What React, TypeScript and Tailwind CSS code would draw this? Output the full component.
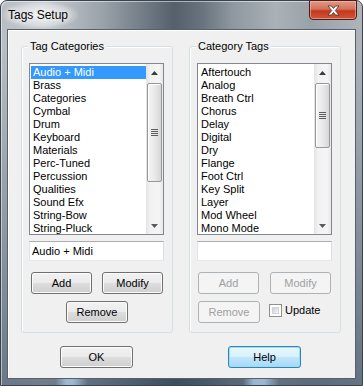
import React from "react";

const leftItems = [
  "Audio + Midi",
  "Brass",
  "Categories",
  "Cymbal",
  "Drum",
  "Keyboard",
  "Materials",
  "Perc-Tuned",
  "Percussion",
  "Qualities",
  "Sound Efx",
  "String-Bow",
  "String-Pluck",
];

const rightItems = [
  "Aftertouch",
  "Analog",
  "Breath Ctrl",
  "Chorus",
  "Delay",
  "Digital",
  "Dry",
  "Flange",
  "Foot Ctrl",
  "Key Split",
  "Layer",
  "Mod Wheel",
  "Mono Mode",
];

function Arrow({ up }: { up?: boolean }) {
  return (
    <svg width="7" height="4" viewBox="0 0 7 4">
      {up ? (
        <path d="M0 4 L3.5 0 L7 4 Z" fill="#3c3c3c" />
      ) : (
        <path d="M0 0 L7 0 L3.5 4 Z" fill="#5a5a5a" />
      )}
    </svg>
  );
}

function Scrollbar({ big }: { big?: boolean }) {
  return (
    <div className="w-[17px] h-full flex flex-col bg-[linear-gradient(90deg,#e3e3e3_0%,#f2f2f2_25%,#f5f5f5_75%,#e8e8e8_100%)]">
      <div className="h-[17px] flex items-center justify-center">
        <Arrow up />
      </div>
      <div
        className={
          big
            ? "mt-[2px] mx-[1px] h-[99px] rounded-[2px] border border-[#979797] bg-[linear-gradient(90deg,#f4f4f4_0%,#eaeaea_50%,#d6d6d6_100%)] shadow-[inset_1px_1px_0_#fff] flex items-center justify-center"
            : "mt-[2px] mx-[1px] h-[65px] rounded-[2px] border border-[#979797] bg-[linear-gradient(90deg,#f4f4f4_0%,#eaeaea_50%,#d6d6d6_100%)] shadow-[inset_1px_1px_0_#fff] flex items-center justify-center"
        }
      >
        <div className="flex flex-col gap-[1px]">
          <div className="w-[7px] h-[1px] bg-[#5d5d5d]" />
          <div className="w-[7px] h-[1px] bg-[#5d5d5d]" />
          <div className="w-[7px] h-[1px] bg-[#5d5d5d]" />
          <div className="w-[7px] h-[1px] bg-[#5d5d5d]" />
        </div>
      </div>
      <div className="flex-1" />
      <div className="h-[17px] flex items-center justify-center">
        <Arrow />
      </div>
    </div>
  );
}

function ListBox({ items, hasSel, big }: { items: string[]; hasSel?: boolean; big?: boolean }) {
  return (
    <div className="w-[135px] h-[172px] border border-[#828790] bg-white flex">
      <div className="flex-1 pt-[2px] pl-[1px] overflow-hidden">
        {items.map((it, i) => (
          <div
            key={it}
            className={
              hasSel && i === 0
                ? "h-[13px] leading-[13px] pl-[2px] bg-[#3399ff] text-white whitespace-nowrap"
                : "h-[13px] leading-[13px] pl-[2px] text-black whitespace-nowrap"
            }
          >
            {it}
          </div>
        ))}
      </div>
      <Scrollbar big={big} />
    </div>
  );
}

function Button({
  label,
  w,
  disabled,
  def,
}: {
  label: string;
  w: string;
  disabled?: boolean;
  def?: boolean;
}) {
  let cls =
    "h-[22px] rounded-[3px] border flex items-center justify-center leading-none ";
  if (disabled) {
    cls += "border-[#adb2b5] bg-[#f4f4f4] text-[#a0a0a0]";
  } else if (def) {
    cls +=
      "border-[#3c7fb1] text-black bg-[linear-gradient(180deg,#eaf6fd_0%,#d9f0fc_48%,#bee6fd_52%,#a7d9f5_100%)] shadow-[inset_0_0_0_1px_#8fe0fb]";
  } else {
    cls +=
      "border-[#707070] text-black bg-[linear-gradient(180deg,#f2f2f2_0%,#ebebeb_48%,#dddddd_52%,#cfcfcf_100%)] shadow-[inset_0_0_0_1px_#fcfcfc]";
  }
  return <div className={cls + " " + w}>{label}</div>;
}

function TextBox({ value }: { value?: string }) {
  return (
    <div className="w-[135px] h-[20px] bg-white border border-[#e3e9ef] border-t-[#abadb3] border-l-[#e2e3ea] border-r-[#dbdfe6] flex items-center pl-[2px]">
      {value}
    </div>
  );
}

function Group({ title, children }: { title: string; children: React.ReactNode }) {
  return (
    <div className="relative w-[152px] border border-[#d5dfe5] rounded-[3px] shadow-[inset_1px_1px_0_#fff] pl-[7px] pt-[16px] pb-[9px] flex flex-col">
      <span className="absolute -top-[7px] left-[6px] px-[2px] h-[13px] leading-[13px] bg-[#f0f0f0] text-black">
        {title}
      </span>
      {children}
    </div>
  );
}

export default function App() {
  return (
    <div className="w-[363px] h-[386px] font-['Liberation_Sans',Arial,sans-serif] text-[11px] text-black">
      <div className="w-[363px] h-[386px] rounded-t-[7px] border border-[#38434d] flex flex-col bg-[linear-gradient(180deg,rgba(0,0,0,0)_0%,rgba(0,0,0,0)_12%,rgba(40,62,85,0.55)_100%),linear-gradient(90deg,#b7bdc3_0%,#c8ccd0_12%,#9aa2aa_28%,#55606b_48%,#6a747e_56%,#8e979f_64%,#aab1b7_76%,#9aa2a9_86%,#aeb4ba_100%)] shadow-[inset_1px_1px_0_rgba(255,255,255,0.5)]">
        <div className="h-[28px] flex items-center shrink-0">
          <span className="ml-[2px] pl-[5px] pr-[10px] py-[4px] text-[12px] bg-[radial-gradient(ellipse_at_center,rgba(255,255,255,0.75)_0%,rgba(255,255,255,0.35)_55%,rgba(255,255,255,0)_75%)] [text-shadow:0_0_5px_#fff]">
            Tags Setup
          </span>
          <div className="ml-auto mr-[5px] self-start -mt-[1px] w-[48px] h-[20px] rounded-b-[4px] border border-[#4d1e17] bg-[linear-gradient(180deg,#e09a88_0%,#d4705a_45%,#c2391c_55%,#d0553a_100%)] shadow-[inset_0_0_0_1px_rgba(255,200,190,0.5)] flex items-center justify-center">
            <svg width="13" height="11" viewBox="0 0 13 11">
              <path
                d="M1 1 L4.5 1 L6.5 3.5 L8.5 1 L12 1 L8.3 5.5 L12 10 L8.5 10 L6.5 7.5 L4.5 10 L1 10 L4.7 5.5 Z"
                fill="#ffffff"
                stroke="#4a2a25"
                strokeWidth="0.8"
                strokeLinejoin="round"
              />
            </svg>
          </div>
        </div>
        <div className="mx-[6px] h-[350px] border border-[#56616b] bg-[#f0f0f0] shadow-[inset_1px_1px_0_#ffffff] pt-[16px] pl-[13px] flex flex-col shrink-0">
          <div className="flex gap-[16px]">
            <Group title="Tag Categories">
              <ListBox items={leftItems} hasSel big />
              <div className="mt-[6px]">
                <TextBox value="Audio + Midi" />
              </div>
              <div className="mt-[11px] flex">
                <div className="ml-[2px]">
                  <Button label="Add" w="w-[61px]" />
                </div>
                <div className="ml-[10px]">
                  <Button label="Modify" w="w-[61px]" />
                </div>
              </div>
              <div className="mt-[7px] flex">
                <div className="ml-[37px]">
                  <Button label="Remove" w="w-[62px]" />
                </div>
              </div>
            </Group>
            <Group title="Category Tags">
              <ListBox items={rightItems} />
              <div className="mt-[6px]">
                <TextBox />
              </div>
              <div className="mt-[11px] flex">
                <div className="ml-[1px]">
                  <Button label="Add" w="w-[61px]" disabled />
                </div>
                <div className="ml-[11px]">
                  <Button label="Modify" w="w-[61px]" disabled />
                </div>
              </div>
              <div className="mt-[7px] flex items-start">
                <div className="ml-[1px]">
                  <Button label="Remove" w="w-[62px]" disabled />
                </div>
                <div className="ml-[9px] mt-[3px] w-[13px] h-[13px] border border-[#8e8f8f] bg-white p-[2px]">
                  <div className="w-full h-full bg-[linear-gradient(135deg,#cbcfd5_0%,#e4e6ea_60%,#f6f6f6_100%)] border border-[#d0d3d8]" />
                </div>
                <span className="ml-[3px] mt-[3px] leading-[13px]">Update</span>
              </div>
            </Group>
          </div>
          <div className="mt-[13px] flex">
            <div className="ml-[39px]">
              <Button label="OK" w="w-[73px]" />
            </div>
            <div className="ml-[95px]">
              <Button label="Help" w="w-[73px]" def />
            </div>
          </div>
        </div>
        <div className="flex-1 bg-[linear-gradient(90deg,rgba(0,0,0,0)_0%,rgba(0,0,0,0)_15%,rgba(170,200,230,0.8)_18%,rgba(170,200,230,0.8)_20%,rgba(0,0,0,0)_24%,rgba(0,0,0,0)_67%,rgba(170,200,230,0.8)_70%,rgba(170,200,230,0.8)_73%,rgba(0,0,0,0)_77%)]" />
      </div>
    </div>
  );
}
